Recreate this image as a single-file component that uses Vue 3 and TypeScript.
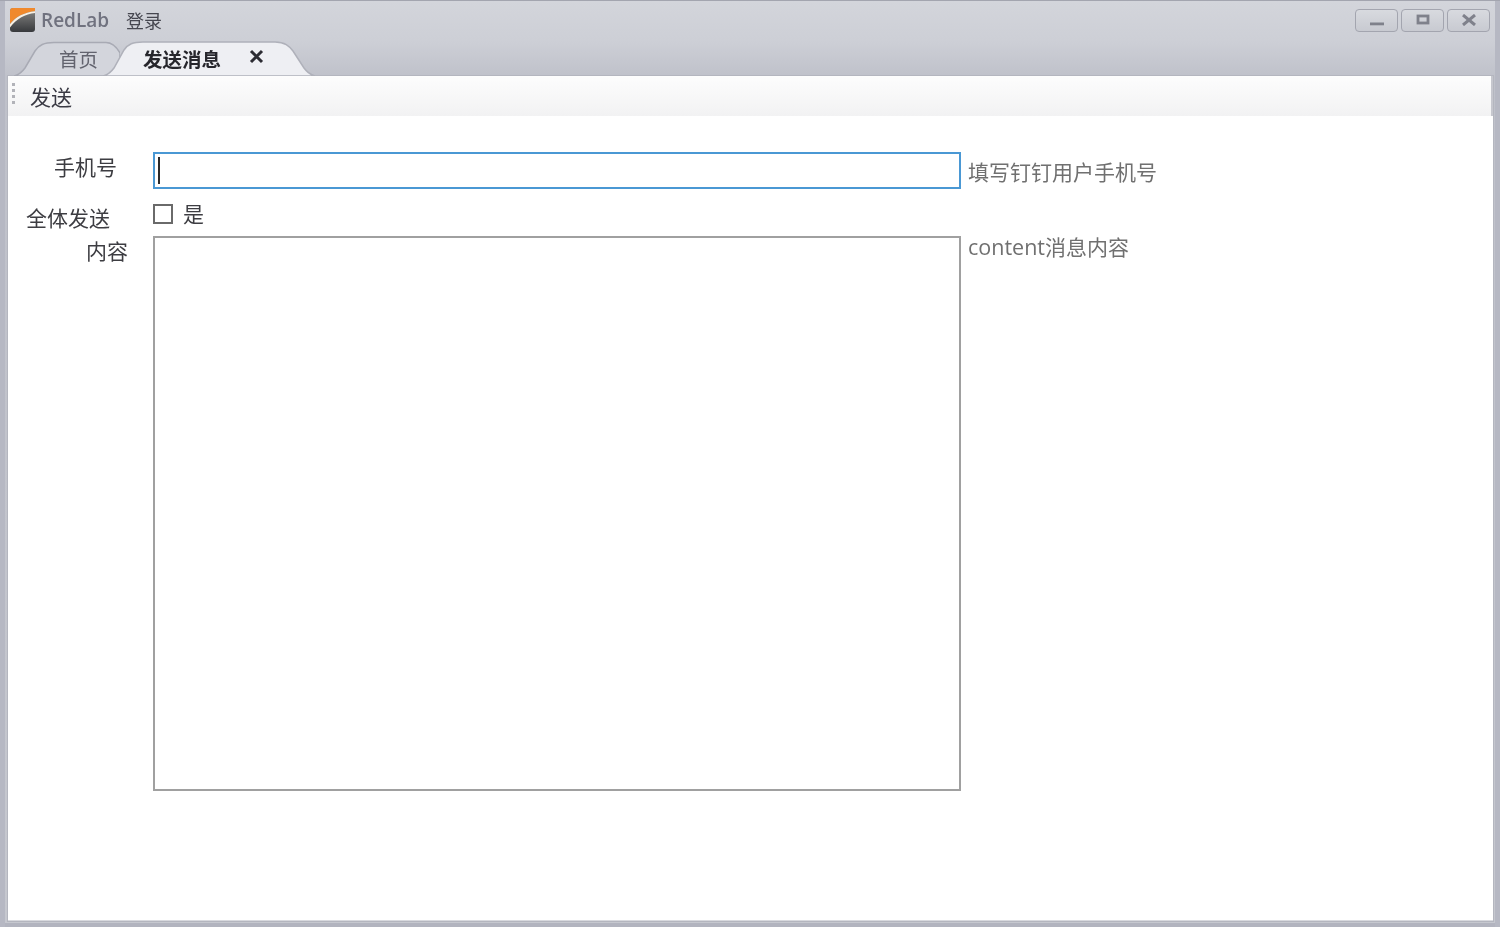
<script setup lang="ts">
import { ref } from 'vue'

const phone = ref('')
const sendAll = ref(false)
const content = ref('')
</script>

<template>
  <div class="window">
    <header class="titlebar">
      <svg class="logo" viewBox="0 0 25 24" aria-hidden="true">
        <defs>
          <linearGradient id="logo-dark" x1="0" y1="0" x2="0" y2="1">
            <stop offset="0" stop-color="#8a8a88" />
            <stop offset="1" stop-color="#37393c" />
          </linearGradient>
        </defs>
        <rect width="25" height="24" rx="3" fill="url(#logo-dark)" />
        <path d="M0 3A3 3 0 0 1 3 0H25V3.200C14 4.500 6 8.500 0 16Z" fill="#f0892c" />
        <path d="M0 16C6 8.500 14 4.500 25 3.200V5C15 6 7 10.500 0 19.500Z" fill="#f7f0e4" />
      </svg>
      <span class="app-name">RedLab</span>
      <span class="login">登录</span>
      <div class="win-buttons">
        <button class="win-btn" aria-label="最小化">
          <svg viewBox="0 0 16 12"><rect x="1" y="8.500" width="14" height="2.800" fill="#7f818b" /></svg>
        </button>
        <button class="win-btn" aria-label="最大化">
          <svg viewBox="0 0 16 12"><rect x="3" y="2" width="10" height="7" fill="none" stroke="#7f818b" stroke-width="2.800" /></svg>
        </button>
        <button class="win-btn" aria-label="关闭">
          <svg viewBox="0 0 16 12"><path d="M2 1 14 11M14 1 2 11" stroke="#7f818b" stroke-width="3" fill="none" /></svg>
        </button>
      </div>
    </header>

    <nav class="tabs">
      <div class="tab tab-home">
        <svg class="tab-shape" viewBox="0 0 106 36" preserveAspectRatio="none" aria-hidden="true">
          <path d="M0 36C5 35 8 32 11 28L21 11C25 5 30 2.500 40 2.500H92C98 2.500 102 6 106 13V36Z" fill="#d3d5dc" stroke="#a8aab4" stroke-width="1.500" />
        </svg>
        <span class="tab-label">首页</span>
      </div>
      <div class="tab tab-active">
        <svg class="tab-shape" viewBox="0 0 212 36" preserveAspectRatio="none" aria-hidden="true">
          <path d="M0 36C5 35 8 32 11 28L21 10C25 4 30 2 40 2H172C182 2 186 6 190 11L201 28C204 32 208 35 212 36Z" fill="#eeeff3" stroke="#afb1ba" stroke-width="1.500" />
        </svg>
        <span class="tab-label">发送消息</span>
        <svg class="tab-close" viewBox="0 0 15 15" aria-label="关闭"><path d="M2 2 13 13M13 2 2 13" stroke="#2c2c33" stroke-width="3" fill="none" /></svg>
      </div>
    </nav>

    <main class="panel">
      <div class="toolbar">
        <span class="grip" aria-hidden="true"><i></i><i></i><i></i><i></i></span>
        <span class="tool">发送</span>
      </div>

      <form class="form" @submit.prevent>
        <div class="row row-phone">
          <label class="label" for="phone">手机号</label>
          <div class="field">
            <input id="phone" v-model="phone" class="text-input" type="text" />
            <span class="caret" aria-hidden="true"></span>
          </div>
          <span class="hint">填写钉钉用户手机号</span>
        </div>

        <div class="row row-all">
          <span class="label">全体发送</span>
          <label class="check">
            <input v-model="sendAll" type="checkbox" />
            <span class="box"></span>
            <span class="yes">是</span>
          </label>
        </div>

        <div class="row row-content">
          <label class="label" for="content">内容</label>
          <textarea id="content" v-model="content" class="text-area"></textarea>
          <span class="hint"><span class="latin">content</span>消息内容</span>
        </div>
      </form>
    </main>
  </div>
</template>

<style>
html, body { margin: 0; background: #c0c2cb; }
</style>

<style scoped>
.window {
  box-sizing: border-box;
  width: 1500px;
  height: 927px;
  display: flex;
  flex-direction: column;
  padding: 0 7px 6px 8px;
  border-top: 1px solid #a3a5af;
  background: linear-gradient(#d3d5db 0, #cdcfd6 40px, #bfc1ca 76px, #c6c8cf 100%);
  box-shadow: inset 5px 0 0 #b6b8c3, inset -5px 0 0 #b6b8c3, inset 0 -4px 0 #b2b4bf;
  font-family: "Noto Sans CJK SC", "Liberation Sans", sans-serif;
  color: #3b3b40;
  overflow: hidden;
  filter: blur(0.45px);
}
.titlebar {
  flex: none;
  height: 39px;
  display: flex;
  align-items: center;
  margin-left: 2px;
  padding-right: 3px;
}
.logo { width: 25px; height: 24px; flex: none; margin-top: -1px; }
.app-name {
  margin: -2px 0 0 6px;
  font-family: "Open Sans", "Liberation Sans", sans-serif;
  font-size: 19px;
  font-weight: 600;
  color: #70727f;
}
.login { margin: -2px 0 0 17px; font-size: 18px; color: #45464f; }
.win-buttons { margin-left: auto; display: flex; gap: 3px; margin-top: -1px; }
.win-btn {
  box-sizing: border-box;
  width: 43px;
  height: 23px;
  padding: 0;
  display: flex;
  align-items: center;
  justify-content: center;
  border: 1.500px solid #a3a5af;
  border-radius: 4px;
  background: linear-gradient(#d8dadf, #c8cad1);
}
.win-btn svg { width: 16px; height: 12px; }

.tabs { flex: none; height: 36px; display: flex; padding-left: 6px; }
.tab { position: relative; height: 36px; display: flex; align-items: center; }
.tab-shape { position: absolute; inset: 0; width: 100%; height: 100%; }
.tab-home { width: 106px; font-size: 19.500px; color: #62636e; }
.tab-active { width: 212px; margin-left: -17px; font-size: 19.500px; font-weight: 700; color: #26262c; }
.tab-label { position: relative; line-height: 1; margin-top: 2px; }
.tab-home .tab-label { margin-left: 45px; }
.tab-active .tab-label { margin-left: 40px; }
.tab-close { position: relative; width: 15px; height: 15px; margin: -3px 0 0 28px; }

.panel {
  flex: 1;
  min-height: 0;
  background: #fff;
  box-shadow: 0 0 0 1px #b4b6bf;
  border-bottom: 1px solid #d8d9de;
}
.toolbar {
  box-sizing: border-box;
  height: 40px;
  display: flex;
  align-items: center;
  background: linear-gradient(#fdfdfd, #f2f2f3);
  border-right: 2px solid #c6c7ce;
}
.grip { display: flex; flex-direction: column; gap: 3px; margin: -6px 0 0 4px; }
.grip i { display: block; width: 3px; height: 3px; background: #b2b3b9; }
.tool { margin-left: 15px; font-size: 21px; line-height: 1; color: #3a3a44; }

.form { padding-top: 36px; }
.row { position: relative; display: flex; align-items: flex-start; }
.label { font-size: 21px; line-height: 30px; color: #3d3d42; white-space: nowrap; }
.row-phone { height: 52px; }
.row-all { height: 32px; }
.row-phone .label { margin: -1px 36px 0 46px; }
.row-all .label { margin: -2px 43px 0 18px; }
.row-content .label { margin: -1px 25px 0 78px; }

.field { position: relative; display: flex; }
.text-input {
  box-sizing: border-box;
  width: 808px;
  height: 37px;
  padding: 0 4px;
  border: 2px solid #4a98d4;
  outline: none;
  background: #fff;
  caret-color: transparent;
}
.caret {
  position: absolute;
  left: 5px;
  top: 5px;
  width: 2px;
  height: 27px;
  background: #2a2a2a;
}
.text-area {
  box-sizing: border-box;
  display: block;
  width: 808px;
  height: 555px;
  margin: 0;
  padding: 2px;
  border: 2px solid #a0a0a0;
  outline: none;
  resize: none;
  background: #fff;
  font: inherit;
}
.hint { margin-left: 7px; font-size: 21px; line-height: 30px; color: #707070; white-space: nowrap; }
.row-phone .hint { margin-top: 4px; }
.row-content .hint { margin-top: -5px; }
.latin { font-family: "Open Sans", sans-serif; font-size: 21.500px; }

.check {
  display: flex;
  align-items: center;
  gap: 10px;
  height: 20px;
  font-size: 21px;
  color: #3d3d42;
}
.check input { position: absolute; opacity: 0; width: 0; height: 0; margin: 0; }
.yes { margin-top: -2px; }
.box {
  box-sizing: border-box;
  width: 20px;
  height: 20px;
  border: 2px solid #6a6a6a;
  background: #fff;
}
</style>
